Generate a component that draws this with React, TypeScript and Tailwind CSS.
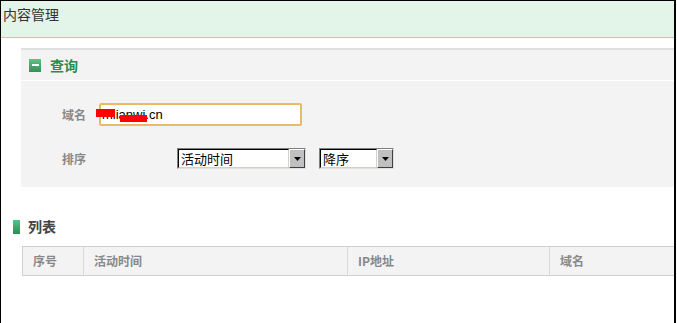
import React from 'react';

const cjk = { fontFamily: '"Noto Sans CJK SC", "Liberation Sans", sans-serif' };

const SelectBox = ({ value, width }: { value: string; width: string }) => (
  <div className={`flex h-[21px] ${width} border border-t-[#808080] border-l-[#808080] border-r-[#e0e0e0] border-b-[#e0e0e0] bg-white`}>
    <div className="flex flex-1 items-center border border-t-black border-l-black border-r-[#d4d0c8] border-b-[#d4d0c8] pl-[2px] text-[13px] leading-none text-black" style={cjk}>
      {value}
    </div>
    <div className="flex w-[16px] items-center justify-center border border-t-white border-l-white border-r-[#404040] border-b-[#404040] bg-[#c0c0c0]">
      <svg width="7" height="4" viewBox="0 0 7 4">
        <path d="M0 0h7L3.5 4z" fill="#000" />
      </svg>
    </div>
  </div>
);

export default function App() {
  return (
    <div className="h-[323px] w-[677px] overflow-hidden bg-white">
      <div className="h-full w-[676px] overflow-hidden border-l border-t border-r-2 border-black">
        {/* page title */}
        <div className="h-[37px] border-b border-[#9fd8b0] bg-[#e3f5e9] pl-[2px] pt-[3px] text-[14px] text-[#333]" style={cjk}>
          内容管理
        </div>

        {/* query panel */}
        <div className="ml-[20px] mt-[10px] border-t-2 border-[#e0e0e0] bg-[#f3f3f3]">
          <div className="flex h-[31px] items-center gap-[9px] border-b border-white pl-[8px]">
            <div className="flex h-[13px] w-[12px] items-center justify-center bg-gradient-to-b from-[#62c184] to-[#2f9254]">
              <div className="h-[2px] w-[7px] bg-white" />
            </div>
            <span className="text-[14px] font-bold text-[#2c8a4f]" style={cjk}>查询</span>
          </div>
          <div className="h-[106px] pl-[41px] pt-[22px]">
            <div className="flex items-center">
              <span className="w-[37px] text-[12px] font-bold text-[#888]" style={cjk}>域名</span>
              <div className="relative flex h-[23px] w-[203px] items-center rounded-[2px] border-2 border-[#e8bc66] bg-white pl-[1px] text-[13px] text-black" style={{ fontFamily: '"Liberation Sans", sans-serif' }}>
                mlianwi.cn
                <div className="absolute left-[-5px] top-[4px] h-[8px] w-[19px] bg-[#ff0000]" />
                <div className="absolute left-[19px] top-[10px] h-[7px] w-[27px] bg-[#ff0000]" />
              </div>
            </div>
            <div className="mt-[22px] flex items-center">
              <span className="w-[115px] text-[12px] font-bold text-[#888]" style={cjk}>排序</span>
              <SelectBox value="活动时间" width="w-[129px]" />
              <div className="w-[13px]" />
              <SelectBox value="降序" width="w-[75px]" />
            </div>
          </div>
        </div>

        {/* list */}
        <div className="ml-[12px] mt-[29px] flex items-center gap-[8px]">
          <div className="h-[14px] w-[7px] bg-gradient-to-b from-[#52c48a] to-[#2a8f52]" />
          <span className="text-[14px] font-bold text-[#444]" style={cjk}>列表</span>
        </div>
        <div className="ml-[21px] mt-[9px] w-[700px]">
          <div className="flex h-[30px] border border-[#d0d0d0] bg-[#f3f3f3] text-[12px] font-bold text-[#888]" style={cjk}>
            <div className="flex w-[61px] items-center border-r border-[#d8d8d8] pl-[10px]">序号</div>
            <div className="flex w-[264px] items-center border-r border-[#d8d8d8] pl-[10px]">活动时间</div>
            <div className="flex w-[202px] items-center border-r border-[#d8d8d8] pl-[10px]">IP地址</div>
            <div className="flex flex-1 items-center pl-[10px]">域名</div>
          </div>
        </div>
      </div>
    </div>
  );
}
